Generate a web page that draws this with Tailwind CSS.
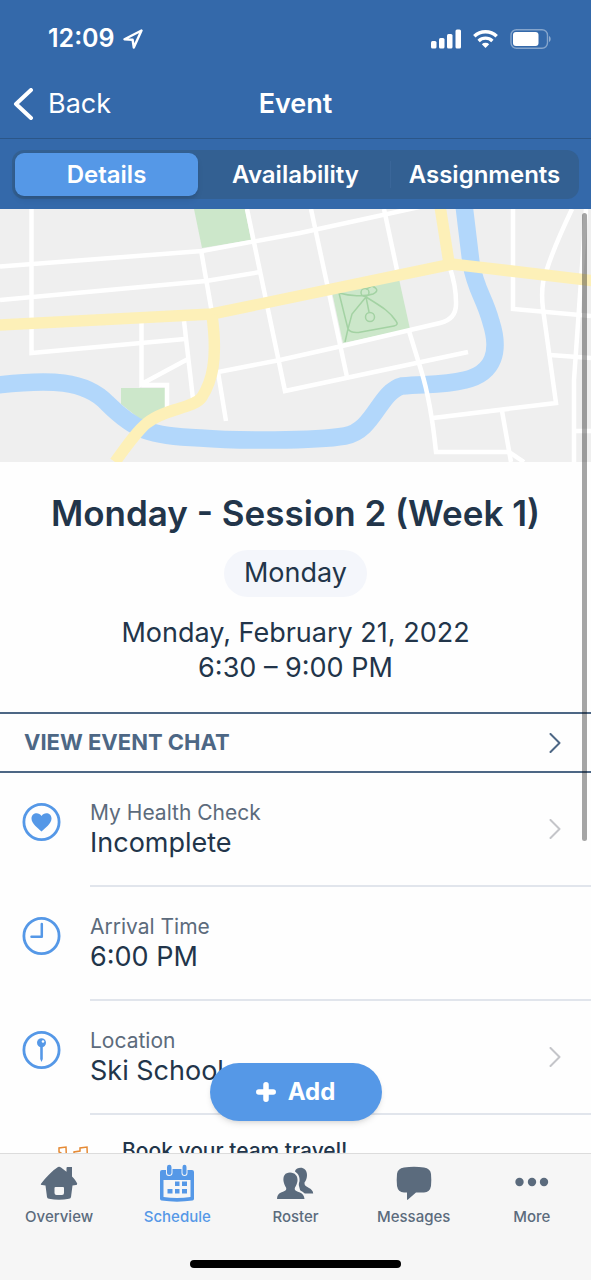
<!DOCTYPE html>
<html lang="en">
<head>
    <meta charset="UTF-8">
    <meta name="viewport" content="width=device-width, initial-scale=1.0">
    <title>Event</title>
    <script src="https://cdn.jsdelivr.net/npm/@tailwindcss/browser@4"></script>
</head>
<body class="h-screen flex flex-col overflow-hidden bg-[#fefefe] font-['Inter',sans-serif] text-[#22354a]">

    <header class="shrink-0 bg-[#3469aa] text-white">
        <!-- Status bar -->
        <div class="h-[70px] pt-2 pl-12 pr-10 flex items-center justify-between">
            <div class="flex items-center gap-2">
                <span class="text-[25px] font-semibold">12:09</span>
                <svg class="w-5 h-5" viewBox="0 0 20 20" fill="none" stroke="white" stroke-width="2.400" stroke-linejoin="round"><path d="M18.500 1.500 1.500 10.200 9.600 10.700 10.800 18.500Z"/></svg>
            </div>
            <div class="flex items-center gap-3">
                <svg class="w-[30px] h-5" viewBox="0 0 30 20" fill="white">
                    <rect x="0" y="12" width="5.500" height="7.500" rx="1.500"/>
                    <rect x="8" y="9" width="5.500" height="10.500" rx="1.500"/>
                    <rect x="16" y="5" width="5.500" height="14.500" rx="1.500"/>
                    <rect x="24.500" y="0.500" width="5.500" height="19" rx="1.500"/>
                </svg>
                <svg class="w-[25px] h-5" viewBox="0 0 25 20" fill="none" stroke="white" stroke-width="3.400">
                    <path d="M1.300 7.300a16 16 0 0 1 22.400 0"/>
                    <path d="M5.600 11.900a10 10 0 0 1 13.800 0"/>
                    <path d="M8.800 15.200a5.400 5.400 0 0 1 7.400 0L12.500 19Z" fill="white" stroke="none"/>
                </svg>
                <svg class="w-[41px] h-5" viewBox="0 0 41 20">
                    <rect x="1" y="0.700" width="36.500" height="18.600" rx="5.500" fill="none" stroke="white" stroke-opacity="0.400" stroke-width="1.400"/>
                    <rect x="3" y="3" width="25.500" height="14" rx="3" fill="white"/>
                    <path d="M39 7v6c2.200-1 2.200-5 0-6Z" fill="white" fill-opacity="0.450"/>
                </svg>
            </div>
        </div>

        <!-- Navigation bar -->
        <div class="h-[69px] px-3 grid grid-cols-3 items-center border-b border-[#2b5688]">
            <a href="#" class="flex items-center gap-3 text-[27px]">
                <svg class="w-6 h-8" viewBox="0 0 24 32" fill="none" stroke="white" stroke-width="4" stroke-linecap="round" stroke-linejoin="round"><path d="M19 2 4 16 19 30"/></svg>
                Back
            </a>
            <h1 class="text-center text-[27px] font-semibold">Event</h1>
        </div>

        <!-- Segmented control -->
        <div class="h-[70px] px-3 pt-[11px]">
            <div class="h-[49px] grid grid-cols-3 rounded-xl bg-[#336092] text-2xl font-semibold">
                <button class="my-[3px] mx-[3px] rounded-[9px] bg-[#5598e7] shadow-md">Details</button>
                <button>Availability</button>
                <button class="relative before:absolute before:left-0 before:top-[11px] before:h-[27px] before:w-px before:bg-[#3a6699]">Assignments</button>
            </div>
        </div>
    </header>

    <main class="relative flex-1 min-h-0 overflow-hidden">
        <svg class="w-full h-[253px] block bg-[#efefef]" viewBox="0 209 591 253" preserveAspectRatio="xMidYMid slice" fill="none">
            <!-- Parks -->
            <path d="M194 209H245L251 240 202 248Z" fill="#cce7ca"/>
            <path d="M121 388H166V412L146 424 121 404Z" fill="#cce7ca"/>
            <path d="M332 292 399 279 410 329 343 343Z" fill="#cce7ca"/>
            <g stroke="#a3d2a3" stroke-width="1.500">
                <circle cx="370" cy="317" r="4.500"/>
                <circle cx="365" cy="292.500" r="4"/>
                <path d="M345 342 348 329 339 293C350 296 364 297 373 294Q381 290 372 286L366 289M366 297 352 314 348 329Q352 334 361 332L394 326Q399 325 396 321C390 312 384 308 366 297L369 312"/>
            </g>
            <!-- River -->
            <path d="M-2 385C50 379 85 380 107 403 135 431 150 436 200 438 235 441 315 441 345 436 374 431 379 392 402 386 430 384 445 385 465 380 495 373 500 350 491 322 484 296 476 291 471 263L464 205" stroke="#b2d7fb" stroke-width="17.500"/>
            <!-- Streets -->
            <g stroke="#fff" stroke-width="4.500">
                <path d="M31.500 209V353L185 339"/>
                <path d="M0 266.500 202 251 300 233 424 206"/>
                <path d="M0 300 206 281 260 272"/>
                <path d="M201 250 212 313M247 209 285 391 468 352"/>
                <path d="M141.500 323V384L188 359M141.500 385H167V410M184 321 193 399"/>
                <path d="M226 421 218 372 280 360 342 346 440 323Q457 319 456 302 456 286 450 268"/>
                <path d="M311 209 347 377M384 209 397 270"/>
                <path d="M409 331 421 370Q431 402 436 452H509L524 462"/>
                <path d="M433 418 556 403 543 309Q540 285 547 269 554 247 572 209"/>
                <path d="M502 411 511 462M513 209V309L591 316M550 355 591 358"/>
                <path d="M586 209 574 380V462M576 431H591"/>
            </g>
            <!-- Main roads -->
            <g stroke="#fdf0b8" stroke-width="11.500">
                <path d="M-2 325 212 314 452 264 595 281"/>
                <path d="M440 206 449 263M212 315C218 360 212 381 202 397 194 409 165 408 147 423 138 430 128 444 115 462"/>
            </g>
        </svg>

        <section class="pt-[31px] pb-[27px] flex flex-col items-center text-center border-b-2 border-[#4d6785]">
            <h2 class="text-[35px] leading-[40px] font-semibold">Monday - Session 2 (Week 1)</h2>
            <p class="mt-[17px] h-[47px] px-5 flex items-center rounded-full bg-[#f4f6fb] text-[27px]">Monday</p>
            <p class="mt-[18px] text-[27px] leading-[35px]">Monday, February 21, 2022<br>6:30 – 9:00 PM</p>
        </section>

        <a href="#" class="h-[59px] pl-6 pr-[30px] flex items-center justify-between border-b-2 border-[#4d6785] text-[22px] font-bold text-[#4d6785]">
            VIEW EVENT CHAT
            <svg class="w-3 h-5" viewBox="0 0 12 20" fill="none" stroke="#4d6785" stroke-width="2" stroke-linecap="round" stroke-linejoin="round"><path d="M1.500 1 10.500 10 1.500 19"/></svg>
        </a>

        <ul>
            <li class="pl-[22px] flex gap-7">
                <svg class="w-10 h-10 mt-[29px]" viewBox="0 0 40 40" fill="none">
                    <circle cx="19.500" cy="20" r="17.600" stroke="#5598e7" stroke-width="2.800"/>
                    <path d="M19.500 29.500C16 26 9.500 22 9.500 16.500 9.500 11 16.500 9.500 19.500 14 22.500 9.500 29.500 11 29.500 16.500 29.500 22 23 26 19.500 29.500Z" fill="#5598e7"/>
                </svg>
                <a href="#" class="flex-1 h-[114px] pr-[30px] flex items-center justify-between border-b-2 border-[#e1e5ec]">
                    <span class="pb-px">
                        <span class="block text-[21px] leading-[28px] text-[#5c6b7c]">My Health Check</span>
                        <span class="block text-[27px] leading-[32px]">Incomplete</span>
                    </span>
                    <svg class="w-3 h-5" viewBox="0 0 12 20" fill="none" stroke="#c4c5c9" stroke-width="2" stroke-linecap="round" stroke-linejoin="round"><path d="M1.500 1 10.500 10 1.500 19"/></svg>
                </a>
            </li>
            <li class="pl-[22px] flex gap-7">
                <svg class="w-10 h-10 mt-[29px]" viewBox="0 0 40 40" fill="none" stroke="#5598e7" stroke-linecap="round" stroke-linejoin="round">
                    <circle cx="19.500" cy="20" r="17.600" stroke-width="2.800"/>
                    <path d="M19.800 8V20.800H9.500" stroke-width="2.500"/>
                </svg>
                <div class="flex-1 h-[114px] flex items-center border-b-2 border-[#e1e5ec]">
                    <p class="pb-px">
                        <span class="block text-[21px] leading-[28px] text-[#5c6b7c]">Arrival Time</span>
                        <span class="block text-[27px] leading-[32px]">6:00 PM</span>
                    </p>
                </div>
            </li>
            <li class="pl-[22px] flex gap-7">
                <svg class="w-10 h-10 mt-[29px]" viewBox="0 0 40 40" fill="none">
                    <circle cx="19.500" cy="20" r="17.600" stroke="#5598e7" stroke-width="2.800"/>
                    <circle cx="19.500" cy="12.800" r="4.500" fill="#5598e7"/>
                    <path d="M18.200 16H20.800V29L19.500 32 18.200 29Z" fill="#5598e7"/>
                    <circle cx="21" cy="11.500" r="1.300" fill="#fff"/>
                </svg>
                <a href="#" class="flex-1 h-[114px] pr-[30px] flex items-center justify-between border-b-2 border-[#e1e5ec]">
                    <span class="pb-px">
                        <span class="block text-[21px] leading-[28px] text-[#5c6b7c]">Location</span>
                        <span class="block text-[27px] leading-[32px]">Ski School</span>
                    </span>
                    <svg class="w-3 h-5" viewBox="0 0 12 20" fill="none" stroke="#c4c5c9" stroke-width="2" stroke-linecap="round" stroke-linejoin="round"><path d="M1.500 1 10.500 10 1.500 19"/></svg>
                </a>
            </li>
            <li class="pl-[58px] pt-5 flex gap-8">
                <svg class="w-8 h-8 mt-2" viewBox="0 0 32 32" fill="none" stroke="#e58a35" stroke-width="1.500"><path d="M3 30V10L1 9V5L8 4 9 30M18 12 16 11V9L22 8V5L29 4 30 30"/></svg>
                <a href="#" class="text-[21px] leading-[32px] font-medium">Book your team travel!</a>
            </li>
        </ul>

        <!-- Scroll indicator -->
        <div class="absolute top-1 right-1 w-[5px] h-[628px] rounded-full bg-black/35"></div>

        <button class="absolute bottom-8 left-1/2 -translate-x-1/2 h-[58px] w-[172px] flex items-center justify-center gap-3 rounded-full bg-[#5598e7] shadow-md text-2xl font-bold text-white">
            <svg class="w-5 h-5" viewBox="0 0 20 20" fill="none" stroke="white" stroke-width="5.500" stroke-linecap="round"><path d="M10 2.800V17.200M2.800 10H17.200"/></svg>
            Add
        </button>
    </main>

    <!-- Tab bar -->
    <footer class="shrink-0 h-[127px] flex flex-col justify-between items-center pb-3 bg-[#f6f6f6] border-t border-[#dcdcdc]">
        <nav class="w-full pt-[9px] grid grid-cols-5 text-[15px] leading-5 font-medium text-[#5b6b7d]">
            <a href="#" class="flex flex-col items-center gap-1">
                <svg class="w-10 h-10" viewBox="0 0 40 40" fill="currentColor"><path fill-rule="evenodd" d="M1.800 21C7 14 13 8 19 4Q20.500 3.300 22 4.500L27.500 8.800V5Q27.500 4 28.500 4H33V13.500C35.500 16 37 18 38.200 20.500Q38.300 22 37 22L33.500 22.500 32 34Q31.800 35.500 30 35.800 20 37.500 10 35.800 8.200 35.500 8 34L6.500 22.500 3 22Q1.500 22 1.800 21ZM15.500 25V30Q15.500 31.800 17.500 32H23Q25 31.800 25 30V25Q25 24 24 24H16.500Q15.500 24 15.500 25Z"/></svg>
                Overview
            </a>
            <a href="#" class="flex flex-col items-center gap-1 text-[#5598e7]">
                <svg class="w-10 h-10" viewBox="0 0 40 40" fill="currentColor">
                    <path fill-rule="evenodd" d="M5 7H9V10Q9 13 12 13 15.500 13 15.500 10V6H24.500V10Q24.500 13 27.500 13 30.500 13 30.500 10V7H35Q37 7 37 9V35.500Q37 37.300 35.500 37.600 20 39.800 4.500 37.600 3 37.300 3 35.500V9Q3 7 5 7ZM6.500 17V34Q20 36 33.500 34V17Z"/>
                    <path d="M10 4Q10 1.700 12.300 1.700 14.500 1.700 14.500 4V10Q14.500 12 12.300 12 10 12 10 10ZM25.500 4Q25.500 1.700 27.500 1.700 29.500 1.700 29.500 4V10Q29.500 12 27.500 12 25.500 12 25.500 10Z"/>
                    <path d="M18 18.500H22.500V23H18ZM25 18.500H30V23H25ZM10.500 26H15.500V30.500H10.500ZM18 26H22.500V30.500H18ZM25 26H30V30.500H25Z"/>
                </svg>
                Schedule
            </a>
            <a href="#" class="flex flex-col items-center gap-1">
                <svg class="w-10 h-10" viewBox="0 0 40 40" fill="currentColor">
                    <path d="M20 8C22 3.500 32 3 32 12 32 15 31 18 29.500 19.500 29 22 31 23.500 34 25Q38 27 38.200 30.500H26Z"/>
                    <path d="M15 9.500C20 9.500 23 13 22.500 18 22 21 21 23 20 24.500 19 27.500 21 28 25 29.500Q29 31 29.500 36H2Q2 31 6 29.500C10 28 12 27.500 11 24.500 10 23 9 21 8.500 18 8 13 10 9.500 15 9.500Z" stroke="#f6f6f6" stroke-width="4" paint-order="stroke"/>
                </svg>
                Roster
            </a>
            <a href="#" class="flex flex-col items-center gap-1">
                <svg class="w-10 h-10" viewBox="0 0 40 40" fill="currentColor"><path d="M10 4.500Q20 3 30 4.500 36.500 5.500 37 11 37.600 17 37 23 36 29 30 29.500H22L14 36.500Q13 37.500 13 36V29.500H10Q4 29 3 23 2.400 17 3 11 3.500 5.500 10 4.500Z"/></svg>
                Messages
            </a>
            <a href="#" class="flex flex-col items-center gap-1">
                <svg class="w-10 h-10" viewBox="0 0 40 40" fill="currentColor"><circle cx="7.500" cy="19" r="4.200"/><circle cx="20" cy="19" r="4.200"/><circle cx="32" cy="19" r="4.200"/></svg>
                More
            </a>
        </nav>
        <div class="w-[211px] h-2 rounded-full bg-black"></div>
    </footer>

</body>
</html>
